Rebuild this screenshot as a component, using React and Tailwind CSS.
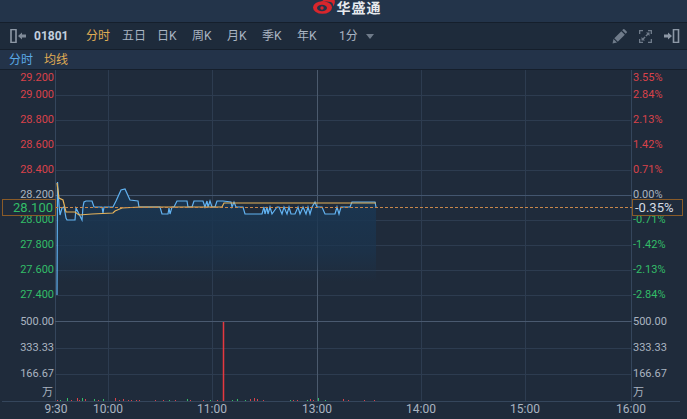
import React from 'react';

const FONT = { sans: '"Roboto", "Noto Sans CJK SC", sans-serif' };

const RED = '#d9424a';
const GREEN = '#33bd68';
const GRAY = '#aab4c0';

const tabs = ['五日', '日K', '周K', '月K', '季K', '年K'];

const priceLabels = [
  ['29.200', 81, RED], ['29.000', 98, RED], ['28.800', 123, RED], ['28.600', 148, RED], ['28.400', 173, RED],
  ['28.200', 198, GRAY], ['28.000', 223, GREEN], ['27.800', 248, GREEN], ['27.600', 273, GREEN], ['27.400', 298, GREEN],
];
const pctLabels = [
  ['3.55%', 81, RED], ['2.84%', 98, RED], ['2.13%', 123, RED], ['1.42%', 148, RED], ['0.71%', 173, RED],
  ['0.00%', 198, GRAY], ['-0.71%', 223, GREEN], ['-1.42%', 248, GREEN], ['-2.13%', 273, GREEN], ['-2.84%', 298, GREEN],
];
const volLabels = [['500.00', 325], ['333.33', 351], ['166.67', 377]];
const timeLabels = [['9:30', 56], ['10:00', 108], ['11:00', 212], ['13:00', 317], ['14:00', 421], ['15:00', 525], ['16:00', 631]];

const pricePts = '57,295 57.5,182 59,205 60,215 62,208 64,207 66,218 67,220 75,220 76,208 78,212 82,220 83,207 84,202 86,201 92,201 94,207 102,207 103,213 104,207 113,207 116,201 121,190 125,189 130,200 138,201 139,207 160,207 162,214 168,214 169,208 170,214 172,207 174,207 177,201 187,201 188,207 192,207 194,201 203,201 205,207 207,201 208,207 210,201 212,207 215,207 217,201 223,201 231,202 232,207 234,202 236,207 238,207 243,207 245,214 262,214 264,207 265,214 267,207 268,214 270,207 272,214 277,207 279,207 282,214 284,207 287,214 289,207 291,214 295,214 298,207 300,214 303,207 306,214 308,207 310,214 312,207 315,202 317,207 322,207 325,214 335,214 337,207 339,214 341,207 343,207 350,207 352,202 375,202 376,207';
const avgPts = '57,183 59,198 63,200 66,212 75,212 79,215 92,214 113,213 115,211 122,208 140,207 222,207 224,203 253,203 376,203';

// x, height, colour
const volBars = [
  [57, 1, RED], [60, 1, GREEN], [67, 3, GREEN], [71, 1, RED], [77, 3, RED], [79, 1, RED], [82, 3, GREEN], [85, 2, RED], [94, 2, GREEN], [98, 1, RED], [103, 2, GREEN], [115, 3, RED], [119, 1, RED], [123, 2, RED], [128, 1, RED], [131, 1, RED], [136, 1, RED], [139, 1, RED], [155, 1, RED], [163, 1, RED], [169, 1, GREEN], [175, 1, RED], [187, 2, GREEN], [190, 1, RED], [203, 1, RED], [210, 1, GREEN], [217, 1, RED], [232, 1, GREEN], [237, 2, GREEN], [245, 1, GREEN], [250, 2, RED], [254, 3, RED], [257, 2, RED], [263, 1, RED], [290, 1, GREEN], [293, 1, RED], [297, 1, RED], [307, 1, GREEN], [310, 2, RED], [313, 1, RED], [318, 3, GREEN], [325, 1, GREEN], [343, 2, RED], [348, 1, RED], [364, 1, RED], [374, 1, RED],
];

function LeftCollapseIcon() {
  return (
    <svg width="18" height="14" viewBox="0 0 18 14">
      <rect x="1" y="0.5" width="5" height="13" fill="none" stroke="#8d98a6" strokeWidth="1.6" />
      <path d="M8 7l4-3.5V5.5h4v3h-4v2z" fill="#7f8a98" />
    </svg>
  );
}

function RightCollapseIcon() {
  return (
    <svg width="16" height="14" viewBox="0 0 16 14">
      <rect x="9.5" y="0.5" width="5" height="13" fill="none" stroke="#8d98a6" strokeWidth="1.6" />
      <path d="M8 7L4 3.5V5.5H0v3h4v2z" fill="#8d98a6" />
    </svg>
  );
}

function PencilIcon() {
  return (
    <svg width="15" height="15" viewBox="0 0 15 15" fill="#6f7b8a">
      <path d="M0.5 14.5l1-4.5 3.5 3.5z" />
      <path d="M2.3 9.2l7-7 3.5 3.5-7 7z" />
      <path d="M10.2 1.3l1-1q.6-.5 1.2 0l2.3 2.3q.5.6 0 1.2l-1 1z" />
    </svg>
  );
}

function FullscreenIcon() {
  return (
    <svg width="13" height="13" viewBox="0 0 13 13" fill="#6f7b8a">
      <path d="M0 0h4v1.3H1.3V4H0zM9 0h4v4h-1.3V1.3H9zM0 9h1.3v2.7H4V13H0zM11.7 9H13v4H9v-1.3h2.7z" />
      <path d="M7 2.5h3.5V6L9.2 4.8 7.4 6.6 6.4 5.6l1.800-1.800zM6 10.500H2.500V7l1.300 1.200 1.800-1.800 1 1-1.800 1.800z" />
    </svg>
  );
}

function LogoMark() {
  return (
    <svg width="22" height="16" viewBox="0 0 22 16" className="mt-[-2px]">
      <ellipse cx="9.500" cy="9.500" rx="9.500" ry="6.300" fill="#d8262c" />
      <ellipse cx="9" cy="10" rx="5" ry="3.300" fill="#23344a" />
      <circle cx="9" cy="10" r="1.700" fill="#d8262c" />
      <path d="M8 4C12 0 18 -1 21 1c1.500 2 1 5-1 7.500.2-2.500-.5-4-2.500-4.500C14.500 3 12 3.500 8 4z" fill="#d8262c" />
    </svg>
  );
}

function Chart() {
  return (
    <svg width="687" height="349" viewBox="0 70 687 349" className="block" style={{ fontFamily: FONT.sans }}>
      <defs>
        <linearGradient id="area" gradientUnits="userSpaceOnUse" x1="0" y1="207" x2="0" y2="282">
          <stop offset="0" stopColor="#1a3550" stopOpacity="0.95" />
          <stop offset="0.6" stopColor="#1a3550" stopOpacity="0.6" />
          <stop offset="1" stopColor="#1a3550" stopOpacity="0" />
        </linearGradient>
      </defs>

      {/* grid */}
      {[95, 120, 145, 170, 220, 245, 270, 295, 348, 374].map((y) => (
        <line key={y} x1="55" x2="632" y1={y + 0.5} y2={y + 0.5} stroke="#2d3c50" />
      ))}
      {[108, 212, 421, 525].map((x) => (
        <line key={x} x1={x + 0.5} x2={x + 0.5} y1="70" y2="401" stroke="#2d3c50" />
      ))}
      <line x1="55.500" x2="55.500" y1="70" y2="401" stroke="#35465c" />
      <line x1="631.500" x2="631.500" y1="70" y2="401" stroke="#35465c" />
      <line x1="317.500" x2="317.500" y1="70" y2="401" stroke="#4b5a6d" />
      <line x1="55" x2="632" y1="195.500" y2="195.500" stroke="#43566f" />
      <line x1="55" x2="632" y1="321.500" y2="321.500" stroke="#4a5a70" />
      <line x1="2" x2="680" y1="401.500" y2="401.500" stroke="#35465c" />

      {/* price area */}
      <polygon points={`${pricePts} 376,282 57,282`} fill="url(#area)" />

      {/* volume */}
      {volBars.map(([x, h, c]) => (
        <rect key={x} x={x} y={401 - h} width="1" height={h} fill={c} />
      ))}
      <rect x="222.750" y="322" width="1.500" height="79" fill="#e5383f" />

      <polyline points={pricePts} fill="none" stroke="#62b3f2" strokeWidth="1.200" />
      <polyline points={avgPts} fill="none" stroke="#e6b35a" strokeWidth="1.200" />
      <line x1="55" x2="632" y1="207.500" y2="207.500" stroke="#c8874a" strokeDasharray="3 2" />

      {/* axis labels */}
      {priceLabels.map(([t, y, c]) => (
        <text key={t} x="54" y={y} textAnchor="end" fontSize="11" fill={c}>{t}</text>
      ))}
      {pctLabels.map(([t, y, c]) => (
        <text key={t} x="633" y={y} fontSize="11" fill={c}>{t}</text>
      ))}
      {volLabels.map(([t, y]) => (
        <g key={t}>
          <text x="54" y={y} textAnchor="end" fontSize="11" fill={GRAY}>{t}</text>
          <text x="633" y={y} fontSize="11" fill={GRAY}>{t}</text>
        </g>
      ))}
      <text x="53" y="396" textAnchor="end" fontSize="11" fill={GRAY}>万</text>
      <text x="633" y="396" fontSize="11" fill={GRAY}>万</text>
      {timeLabels.map(([t, x]) => (
        <text key={t} x={x} y="413" textAnchor="middle" fontSize="12" fill={GRAY}>{t}</text>
      ))}

      {/* current price tags */}
      <rect x="2.500" y="199.500" width="53" height="16" fill="#1f2b3b" stroke="#8a5b28" />
      <text x="53" y="212" textAnchor="end" fontSize="13" fill={GREEN}>28.100</text>
      <rect x="632.500" y="199.500" width="50" height="16" fill="#1f2b3b" stroke="#8a5b28" />
      <text x="635" y="212" fontSize="13" fill="#d5dbe3">-0.35%</text>
    </svg>
  );
}

export default function App() {
  return (
    <div className="w-[687px] h-[419px] overflow-hidden bg-[#1f2b3b] flex flex-col" style={{ fontFamily: FONT.sans }}>
      {/* logo bar */}
      <div className="h-[22px] bg-[#23344a] flex items-start justify-center pl-[7px] gap-[2px] shrink-0">
        <LogoMark />
        <span className="text-[14px] leading-[16px] tracking-[1px] font-bold text-[#e6e9ed]">华盛通</span>
      </div>

      {/* toolbar */}
      <div className="h-[28px] bg-[#1e2b3b] border-y border-[#151f2c] flex items-center text-[12px] text-[#a9b4c2] shrink-0">
        <div className="ml-[10px] w-[24px]"><LeftCollapseIcon /></div>
        <span className="font-bold text-[12px] text-[#c3cfdf] w-[52px]">01801</span>
        <span className="text-[#e0ad54] w-[36px]">分时</span>
        <div className="flex">
          {tabs.map((t) => (
            <span key={t} className="w-[35px]">{t}</span>
          ))}
        </div>
        <span className="ml-[7px] w-[27px]">1分</span>
        <span className="w-0 h-0 border-x-[4px] border-x-transparent border-t-[5px] border-t-[#6f7b8a] mt-[1px]" />
        <div className="ml-auto flex items-center gap-[12px] mr-[7px]">
          <PencilIcon />
          <FullscreenIcon />
          <RightCollapseIcon />
        </div>
      </div>

      {/* legend */}
      <div className="h-[20px] bg-[#233349] border-b border-[#151f2c] flex items-center gap-[11px] pl-[9px] text-[12px] shrink-0">
        <span className="text-[#5aa9e6]">分时</span>
        <span className="text-[#e0ad54]">均线</span>
      </div>

      <Chart />
    </div>
  );
}
